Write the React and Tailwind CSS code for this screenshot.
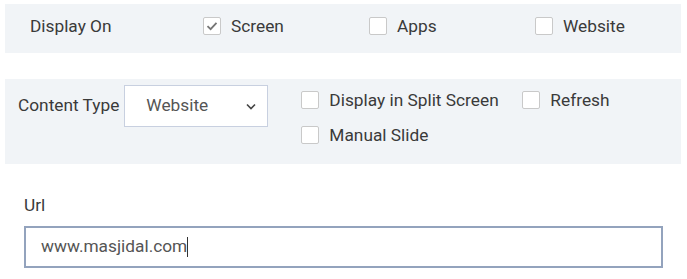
const font = { fontFamily: "Roboto, 'Liberation Sans', sans-serif" };

function Check({ checked, label, className = "" }) {
  return (
    <label className={["flex items-center gap-[10px]", className].join(" ")}>
      <span className="grid h-[18px] w-[18px] place-items-center rounded-[2px] border border-[#c9c9c9] bg-white">
        {checked && (
          <svg width="12" height="10" viewBox="0 0 12 10">
            <path d="M1.5 5.2 L4.6 8.2 L10.5 1.8" fill="none" stroke="#767676" strokeWidth="1.8" />
          </svg>
        )}
      </span>
      <span className="text-[17.3px] leading-[20px] text-[#3a3a3a]">{label}</span>
    </label>
  );
}

export default function App() {
  return (
    <div className="h-[279px] w-[687px] bg-white" style={font}>
      <div className="mx-[5px] pt-[4px]">
        <div className="flex h-[49px] w-[676px] items-start bg-[#f1f4f7] pt-[12px]">
          <div className="w-[198px] pl-[25px] text-[17.3px] leading-[20px] text-[#3a3a3a]">Display On</div>
          <Check checked label="Screen" className="w-[166px]" />
          <Check label="Apps" className="w-[166px]" />
          <Check label="Website" />
        </div>

        <div className="mt-[26px] flex h-[85px] w-[676px] items-start bg-[#f1f4f7] pt-[6px]">
          <div className="flex h-[42px] items-center pl-[13px] pr-[5px] text-[17.3px] text-[#3a3a3a]">
            Content Type
          </div>
          <div className="flex h-[42px] w-[144px] items-center justify-between border border-[#c8d0e0] bg-white pl-[21px] pr-[11px]">
            <span className="text-[17.3px] text-[#555]">Website</span>
            <svg width="10" height="7" viewBox="0 0 10 7">
              <path d="M1 1.5 L5 5.5 L9 1.5" fill="none" stroke="#444" strokeWidth="1.6" />
            </svg>
          </div>
          <div className="ml-[33px] flex flex-col gap-[15px] pt-[5px]">
            <div className="flex">
              <Check label="Display in Split Screen" className="w-[221px]" />
              <Check label="Refresh" />
            </div>
            <Check label="Manual Slide" />
          </div>
        </div>
      </div>

      <div className="px-[24px] pt-[31px]">
        <div className="text-[17.3px] leading-[20px] text-[#3a3a3a]">Url</div>
        <div className="mt-[11px] flex h-[42px] w-[639px] items-center border-2 border-[#93a3bd] bg-white pl-[15px]">
          <span className="text-[17.3px] text-[#555]">www.masjidal.com</span>
          <span className="h-[20px] w-[1px] bg-[#333]" />
        </div>
      </div>
    </div>
  );
}
